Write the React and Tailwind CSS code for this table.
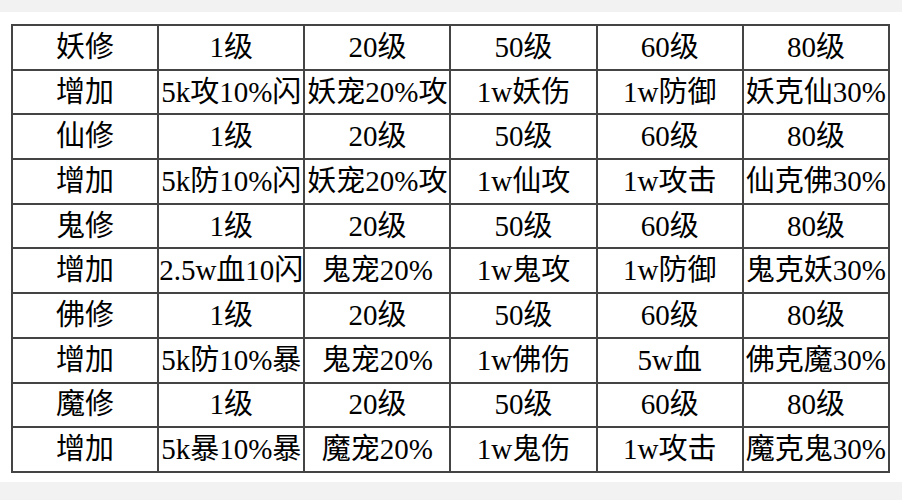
import React from 'react';

const rows = [
  ['妖修', '1级', '20级', '50级', '60级', '80级'],
  ['增加', '5k攻10%闪', '妖宠20%攻', '1w妖伤', '1w防御', '妖克仙30%'],
  ['仙修', '1级', '20级', '50级', '60级', '80级'],
  ['增加', '5k防10%闪', '妖宠20%攻', '1w仙攻', '1w攻击', '仙克佛30%'],
  ['鬼修', '1级', '20级', '50级', '60级', '80级'],
  ['增加', '2.5w血10闪', '鬼宠20%', '1w鬼攻', '1w防御', '鬼克妖30%'],
  ['佛修', '1级', '20级', '50级', '60级', '80级'],
  ['增加', '5k防10%暴', '鬼宠20%', '1w佛伤', '5w血', '佛克魔30%'],
  ['魔修', '1级', '20级', '50级', '60级', '80级'],
  ['增加', '5k暴10%暴', '魔宠20%', '1w鬼伤', '1w攻击', '魔克鬼30%'],
];

export default function App() {
  return (
    <div className="w-[902px] h-[500px] flex flex-col bg-white overflow-hidden">
      <div className="h-[12px] bg-[#f2f2f2]" />
      <div className="flex-1 pt-[12px] pl-[11px]">
        <table
          className="w-[879px] table-fixed border-collapse text-black"
          style={{ fontFamily: '"Liberation Serif", "Noto Sans CJK SC", serif' }}
        >
          <tbody>
            {rows.map((row, i) => (
              <tr key={i} className="h-[44.7px]">
                {row.map((cell, j) => (
                  <td
                    key={j}
                    className="border-2 border-[#444] p-0 text-center text-[29px] leading-none whitespace-nowrap overflow-hidden"
                  >
                    {cell}
                  </td>
                ))}
              </tr>
            ))}
          </tbody>
        </table>
      </div>
      <div className="h-[18px] bg-[#f2f2f2]" />
    </div>
  );
}
